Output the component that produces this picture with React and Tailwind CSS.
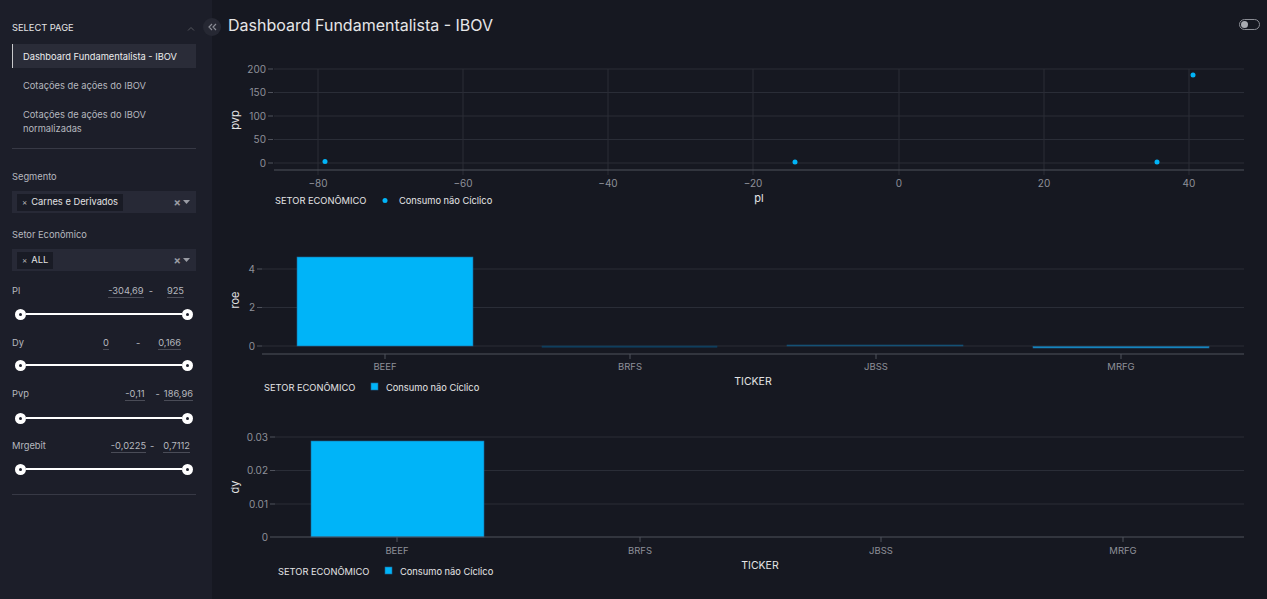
import React from 'react';

const NAV = [
  { label: 'Dashboard Fundamentalista - IBOV', active: true },
  { label: 'Cotações de ações do IBOV' },
  { label: 'Cotações de ações do IBOV normalizadas' },
];

const RANGES = [
  { label: 'Pl', a: '-304,69', b: '925', row: 'mt-[13px]', slider: 'mt-[10px]', dash: 'ml-[5px] mr-[14px]', pr: 'pr-[12px]' },
  { label: 'Dy', a: '0', b: '0,166', row: 'mt-[16px]', slider: 'mt-[9px]', dash: 'ml-[27px] mr-[18px]', pr: 'pr-[15px]' },
  { label: 'Pvp', a: '-0,11', b: '186,96', row: 'mt-[16px]', slider: 'mt-[11px]', dash: 'ml-[11px] mr-[4px]', pr: 'pr-[3px]' },
  { label: 'Mrgebit', a: '-0,0225', b: '0,7112', row: 'mt-[15px]', slider: 'mt-[10px]', dash: 'ml-[4px] mr-[9px]', pr: 'pr-[6px]' },
];

const GRID = '#2a2d37';
const AXIS = '#4f525c';
const TICK = '#8e9099';
const LABEL = '#e4e4e6';
const BLUE = '#00b4f8';

function Tag({ text }) {
  return (
    <span className="ml-[5px] h-[17px] px-[5px] flex items-center gap-[4px] bg-[#191b25] text-[9.3px] text-[#e2e2e4]">
      <span className="text-[8px] text-[#bbb]">×</span>
      {text}
    </span>
  );
}

function MultiSelect({ text }) {
  return (
    <div className="mt-[7px] h-[22px] bg-[#272936] flex items-center justify-between">
      <Tag text={text} />
      <div className="flex items-center gap-[2px] pr-[6px] text-[#9a9ca4]">
        <span className="text-[11px] font-bold leading-none">×</span>
        <svg width="7" height="4" viewBox="0 0 7 4"><path d="M0 0h7L3.5 4z" fill="#9a9ca4" /></svg>
      </div>
    </div>
  );
}

function Slider({ cls }) {
  return (
    <div className={`${cls} h-[12px] flex items-center px-[3px]`}>
      <div className="w-[11px] h-[11px] rounded-full bg-white flex items-center justify-center shrink-0">
        <div className="w-[3px] h-[3px] rounded-full bg-[#1d1f2b]" />
      </div>
      <div className="flex-1 h-[2px] bg-white" />
      <div className="w-[11px] h-[11px] rounded-full bg-white flex items-center justify-center shrink-0">
        <div className="w-[3px] h-[3px] rounded-full bg-[#1d1f2b]" />
      </div>
    </div>
  );
}

function Sidebar() {
  return (
    <aside className="w-[212px] shrink-0 h-[599px] bg-[#1c1e29] pl-3 pr-4 pt-[21px]">
      <div className="h-[14px] flex items-center justify-between text-[9.3px] text-[#e4e4e6]">
        <span>SELECT PAGE</span>
        <svg width="8" height="5" viewBox="0 0 8 5" className="mr-[1px]"><path d="M1 4.5 4 1.5 7 4.5" stroke="#55575f" strokeWidth="1" fill="none" /></svg>
      </div>
      <nav className="mt-[9px] flex flex-col gap-[5px]">
        {NAV.map((n) => (
          <div
            key={n.label}
            className={
              n.active
                ? 'pt-[6px] pb-[4px] leading-[14px] pl-[10px] border-l border-[#c9c9cc] bg-[#2a2c38] text-[9.3px] text-[#ececee]'
                : 'pt-[6px] pb-[4px] leading-[14px] pl-[11px] pr-8 text-[9.3px] text-[#b6b8bf]'
            }
          >
            {n.label}
          </div>
        ))}
      </nav>
      <div className="mt-[8px] h-px bg-[#373945]" />

      <div className="mt-[21px] leading-[14px] text-[9.3px] text-[#b6b8bf]">Segmento</div>
      <MultiSelect text="Carnes e Derivados" />
      <div className="mt-[15px] leading-[14px] text-[9.3px] text-[#b6b8bf]">Setor Econômico</div>
      <MultiSelect text="ALL" />

      {RANGES.map((r) => (
        <div key={r.label}>
          <div className={`${r.row} leading-[14px] flex items-center justify-between text-[9.3px] text-[#b6b8bf]`}>
            <span>{r.label}</span>
            <div className={`flex items-center ${r.pr}`}>
              <span className="border-b border-[#4a4c57] leading-[12px]">{r.a}</span>
              <span className={r.dash}>-</span>
              <span className="border-b border-[#4a4c57] leading-[12px]">{r.b}</span>
            </div>
          </div>
          <Slider cls={r.slider} />
        </div>
      ))}
      <div className="mt-[19px] h-px bg-[#373945]" />
    </aside>
  );
}

// charts are drawn in page coordinates and shifted into place
function ScatterChart() {
  const xs = [[-80, 318], [-60, 463], [-40, 608], [-20, 753], [0, 899], [20, 1044], [40, 1189]];
  const ys = [[200, 69], [150, 92.5], [100, 116], [50, 139.5], [0, 163]];
  const pts = [[325, 161.5], [795, 162], [1157, 162], [1193, 75]];
  return (
    <svg width="1055" height="170" className="block">
      <g transform="translate(-212,-50)" fontSize="10">
        {ys.map(([v, y]) => (
          <g key={v}>
            <line x1="274" x2="1244" y1={y} y2={y} stroke={GRID} />
            <line x1="268" x2="273" y1={y} y2={y} stroke={AXIS} />
            <text x="266" y={y + 3.5} textAnchor="end" fill={TICK}>{v}</text>
          </g>
        ))}
        {xs.map(([v, x]) => (
          <g key={v}>
            <line x1={x} x2={x} y1="69" y2="175" stroke={GRID} />
            <text x={x} y="187" textAnchor="middle" fill={TICK}>{v < 0 ? `−${-v}` : v}</text>
          </g>
        ))}
        <line x1="274" x2="1244" y1="170" y2="170" stroke={AXIS} />
        {pts.map(([x, y]) => <circle key={x} cx={x} cy={y} r="2.5" fill={BLUE} />)}
        <text x="759" y="202" textAnchor="middle" fill={LABEL} fontSize="11">pl</text>
        <text transform="translate(239,120) rotate(-90)" textAnchor="middle" fill={LABEL} fontSize="11">pvp</text>
        <text x="275" y="203.5" fill={LABEL} fontSize="9.3">SETOR ECONÔMICO</text>
        <circle cx="385" cy="200.5" r="2.5" fill={BLUE} />
        <text x="399" y="203.5" fill={LABEL} fontSize="9.3">Consumo não Cíclico</text>
      </g>
    </svg>
  );
}

function BarChart({ top, height, x0, yTicks, axisY, cats, bars, yLabel, yLabelY, tickerX, legendX, catLabelY }) {
  return (
    <svg width="1055" height={height} className="block">
      <g transform={`translate(-212,${-top})`} fontSize="10">
        {yTicks.map(([v, y]) => (
          <g key={v}>
            {y !== axisY && <line x1={x0} x2="1244" y1={y} y2={y} stroke={GRID} />}
            <line x1={x0 - 5} x2={x0} y1={y} y2={y} stroke={AXIS} />
            <text x={x0 - 7} y={y + 3.5} textAnchor="end" fill={TICK}>{v}</text>
          </g>
        ))}
        {bars.map((b, i) => (
          <rect key={i} x={b.x} y={b.y} width={b.w} height={b.h} fill={b.fill} stroke={b.stroke} strokeWidth="0.6" />
        ))}
        <line x1={x0} x2="1244" y1={axisY} y2={axisY} stroke={AXIS} />
        {cats.map(([c, x]) => (
          <g key={c}>
            <line x1={x} x2={x} y1={axisY} y2={axisY + 5} stroke={AXIS} />
            <text x={x} y={catLabelY} textAnchor="middle" fill={TICK} fontSize="9.5">{c}</text>
          </g>
        ))}
        <text x={tickerX} y={catLabelY + 15} textAnchor="middle" fill={LABEL} fontSize="10.5">TICKER</text>
        <text transform={`translate(239,${yLabelY}) rotate(-90)`} textAnchor="middle" fill={LABEL} fontSize="11">{yLabel}</text>
        <text x={legendX} y={catLabelY + 20.5} fill={LABEL} fontSize="9.3">SETOR ECONÔMICO</text>
        <rect x={legendX + 107} y={catLabelY + 13} width="7" height="7" fill={BLUE} stroke="#1a6a9a" strokeWidth="0.6" />
        <text x={legendX + 122} y={catLabelY + 20.5} fill={LABEL} fontSize="9.3">Consumo não Cíclico</text>
      </g>
    </svg>
  );
}

export default function App() {
  return (
    <div className="w-[1267px] h-[599px] flex bg-[#161821] font-['Inter',sans-serif] overflow-hidden">
      <Sidebar />
      <main className="flex-1 relative">
        <button className="absolute left-[-9px] top-[18px] w-[18px] h-[18px] rounded-full bg-[#262833] flex items-center justify-center">
          <svg width="9" height="8" viewBox="0 0 9 8"><path d="M4 1 1 4l3 3M8 1 5 4l3 3" stroke="#8b8d96" strokeWidth="1.2" fill="none" /></svg>
        </button>
        <header className="h-[50px] flex items-center justify-between pl-4 pr-[7px]">
          <h1 className="text-[16px] text-[#e6e6e8] -mt-[1px]">Dashboard Fundamentalista - IBOV</h1>
          <div className="w-[21px] h-[11px] rounded-full border border-[#8a8c94] flex items-center px-[1px] -mt-[1px]">
            <div className="w-[7px] h-[7px] rounded-full bg-[#a9abb2]" />
          </div>
        </header>
        <ScatterChart />
        <BarChart
          top={220}
          height={180}
          x0={262}
          axisY={354}
          yTicks={[[4, 269], [2, 307.5], [0, 346]]}
          cats={[['BEEF', 385], ['BRFS', 630], ['JBSS', 876], ['MRFG', 1121]]}
          bars={[
            { x: 297, y: 257, w: 176, h: 89, fill: BLUE, stroke: '#1a6a9a' },
            { x: 542, y: 346, w: 175, h: 1.2, fill: '#0f3f5e', stroke: '#0f3f5e' },
            { x: 787, y: 345, w: 176, h: 1, fill: '#145276', stroke: '#145276' },
            { x: 1033, y: 346.5, w: 176, h: 1.5, fill: '#1690cc', stroke: '#1a6a9a' },
          ]}
          yLabel="roe"
          yLabelY={300}
          tickerX={753}
          legendX={264}
          catLabelY={370}
        />
        <BarChart
          top={400}
          height={199}
          x0={275}
          axisY={537}
          yTicks={[['0.03', 437], ['0.02', 470.5], ['0.01', 504], ['0', 537]]}
          cats={[['BEEF', 397], ['BRFS', 640], ['JBSS', 881], ['MRFG', 1123]]}
          bars={[{ x: 311, y: 441, w: 173, h: 96, fill: BLUE, stroke: '#1a6a9a' }]}
          yLabel="dy"
          yLabelY={487}
          tickerX={760}
          legendX={278}
          catLabelY={554}
        />
      </main>
    </div>
  );
}
